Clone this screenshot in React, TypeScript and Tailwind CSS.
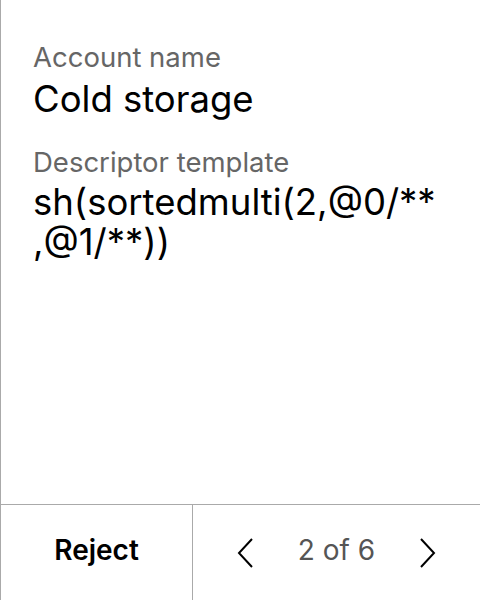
import React from "react";

export default function App() {
  return (
    <div className="w-[480px] h-[600px] bg-white flex flex-col border-l border-[#aaaaaa]" style={{ fontFamily: "Inter, 'Noto Sans', sans-serif" }}>
      <div className="flex-1 pl-[32px] pr-4 pt-[40px]">
        <div className="text-[27.5px] leading-[34px] text-[#666666]">Account name</div>
        <div className="text-[36.5px] leading-[44px] text-black mt-[3px]">Cold storage</div>
        <div className="text-[27.5px] leading-[34px] text-[#666666] mt-[24px]">Descriptor template</div>
        <div className="text-[36.5px] leading-[40px] text-black mt-[3px]">
          <div>sh(sortedmulti(2,@0/**</div>
          <div>,@1/**))</div>
        </div>
      </div>
      <div className="h-[96px] border-t border-[#aaaaaa] flex">
        <div className="w-[192px] flex items-center justify-center border-r border-[#aaaaaa]">
          <span className="text-[28px] font-semibold text-black mb-[5px]">Reject</span>
        </div>
        <div className="flex-1 flex items-center justify-evenly">
          <svg width="18" height="30" viewBox="0 0 18 30" fill="none" stroke="black" strokeWidth="2">
            <path d="M16 1 L3 15 L16 29" />
          </svg>
          <span className="text-[28px] text-[#555555] mb-[5px]">2 of 6</span>
          <svg width="18" height="30" viewBox="0 0 18 30" fill="none" stroke="black" strokeWidth="2">
            <path d="M2 1 L15 15 L2 29" />
          </svg>
        </div>
      </div>
    </div>
  );
}
